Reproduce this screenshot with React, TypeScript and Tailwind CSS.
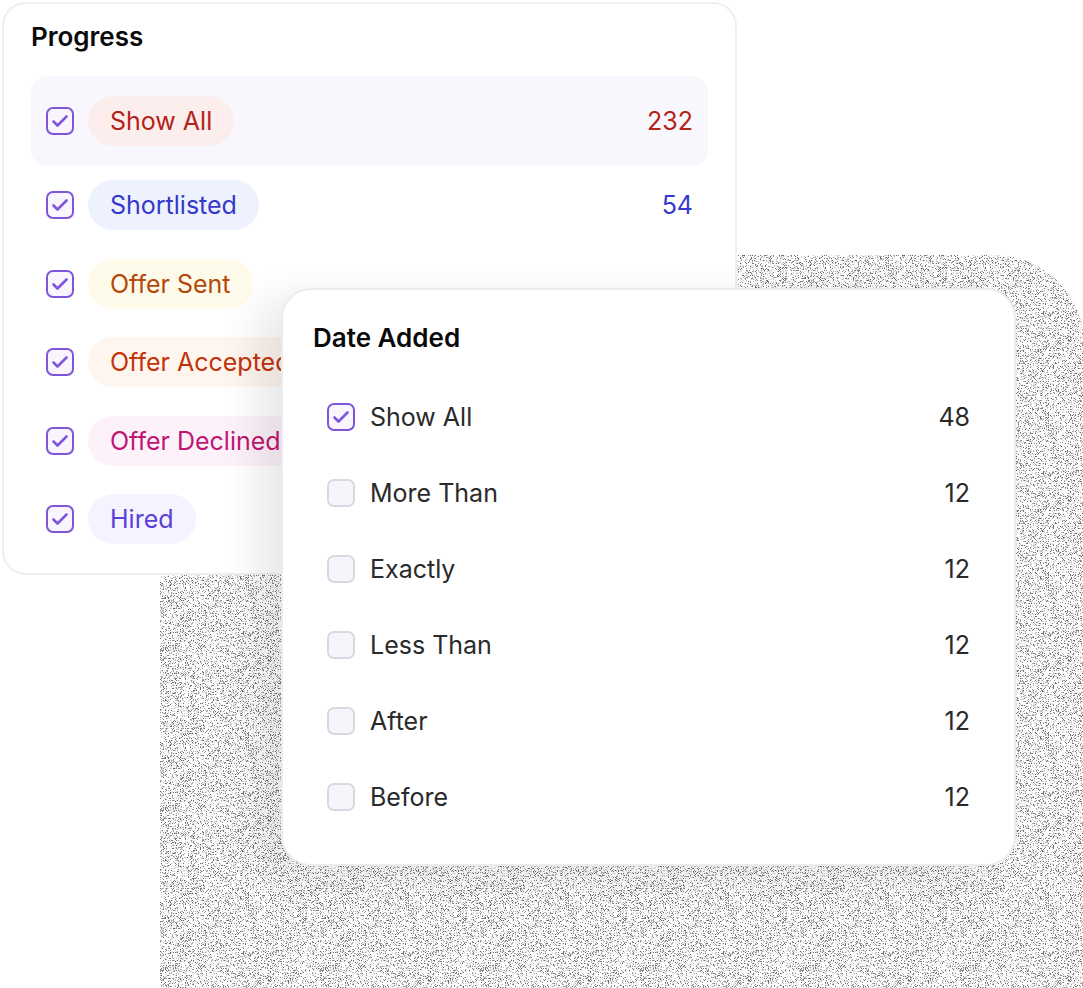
import React from "react";

const font = { fontFamily: "Inter, 'Noto Sans', sans-serif" };

function CheckedBox() {
  return (
    <div className="w-[28px] h-[28px] shrink-0 rounded-[7px] border-2 border-[#7f56d9] bg-[#f9f5ff] flex items-center justify-center">
      <svg width="24" height="24" viewBox="0 0 24 24" fill="none">
        <path d="M5.5 12.5 L9.5 16.5 L18.5 7.5" stroke="#7f56d9" strokeWidth="2.6" strokeLinecap="round" strokeLinejoin="round" />
      </svg>
    </div>
  );
}

function EmptyBox() {
  return <div className="w-[28px] h-[28px] shrink-0 rounded-[7px] border-2 border-[#d9d9e0] bg-[#f6f5fc]" />;
}

const progress = [
  { label: "Show All", count: "232", bg: "bg-[#fdeeee]", fg: "text-[#b42318]", active: true },
  { label: "Shortlisted", count: "54", bg: "bg-[#eef2ff]", fg: "text-[#3538cd]" },
  { label: "Offer Sent", count: "", bg: "bg-[#fffbeb]", fg: "text-[#b54708]" },
  { label: "Offer Accepted", count: "", bg: "bg-[#fef6ee]", fg: "text-[#c4320a]" },
  { label: "Offer Declined", count: "", bg: "bg-[#fdf2fa]", fg: "text-[#c11574]" },
  { label: "Hired", count: "", bg: "bg-[#f4f3ff]", fg: "text-[#5b3fd6]" },
];

const dates = [
  { label: "Show All", count: "48", checked: true },
  { label: "More Than", count: "12" },
  { label: "Exactly", count: "12" },
  { label: "Less Than", count: "12" },
  { label: "After", count: "12" },
  { label: "Before", count: "12" },
];

function Grain() {
  return (
    <svg className="absolute left-[160px] top-[255px] w-[924px] h-[823px]" viewBox="0 0 924 823">
      <defs>
        <filter id="grain" x="0" y="0" width="100%" height="100%">
          <feTurbulence type="fractalNoise" baseFrequency="1.6" numOctaves="1" seed="7" result="t" />
          <feColorMatrix in="t" type="matrix" values="0 0 0 0 0.15  0 0 0 0 0.15  0 0 0 0 0.15  7 0 0 0 -3.7" result="n" />
          <feComposite in="n" in2="SourceGraphic" operator="in" />
        </filter>
      </defs>
      <rect x="0" y="0" width="924" height="823" rx="90" fill="#000" filter="url(#grain)" />
    </svg>
  );
}

export default function App() {
  return (
    <div className="relative w-[1083px] h-[988px] bg-white overflow-hidden" style={font}>
      <Grain />
      <div className="relative ml-[2px] mt-[2px] w-[735px] h-[573px] rounded-[24px] border-2 border-[#efeff3] bg-white px-[27px] pt-[16px]">
        <div className="text-[26px] leading-[34px] font-semibold text-[#0a0a0a]">Progress</div>
        <div className="mt-[22px] flex flex-col">
          {progress.map((p) => (
            <div
              key={p.label}
              className={
                p.active
                  ? "h-[90px] flex items-center px-[15px] rounded-[16px] bg-[#f9f7fe]"
                  : "h-[78.5px] flex items-center px-[15px]"
              }
            >
              <CheckedBox />
              <div className={`ml-[14px] h-[50px] flex items-center px-[22px] rounded-full ${p.bg}`}>
                <span className={`text-[25px] leading-[32px] ${p.fg}`}>{p.label}</span>
              </div>
              {p.count && <span className={`ml-auto text-[25px] leading-[32px] ${p.fg}`}>{p.count}</span>}
            </div>
          ))}
        </div>
      </div>

      <div className="absolute left-[281px] top-[288px] w-[735px] h-[578px] rounded-[30px] border-2 border-[#ececf0] bg-white px-[30px] pt-[31px] shadow-[-24px_10px_40px_rgba(0,0,0,0.09)]">
        <div className="text-[26px] leading-[34px] font-semibold text-[#0a0a0a]">Date Added</div>
        <div className="mt-[24px] flex flex-col">
          {dates.map((d) => (
            <div key={d.label} className="h-[76px] flex items-center px-[14px]">
              {d.checked ? <CheckedBox /> : <EmptyBox />}
              <span className="ml-[15px] text-[25px] leading-[32px] text-[#2a2a2a]">{d.label}</span>
              <span className="ml-auto text-[25px] leading-[32px] text-[#2a2a2a]">{d.count}</span>
            </div>
          ))}
        </div>
      </div>
    </div>
  );
}
